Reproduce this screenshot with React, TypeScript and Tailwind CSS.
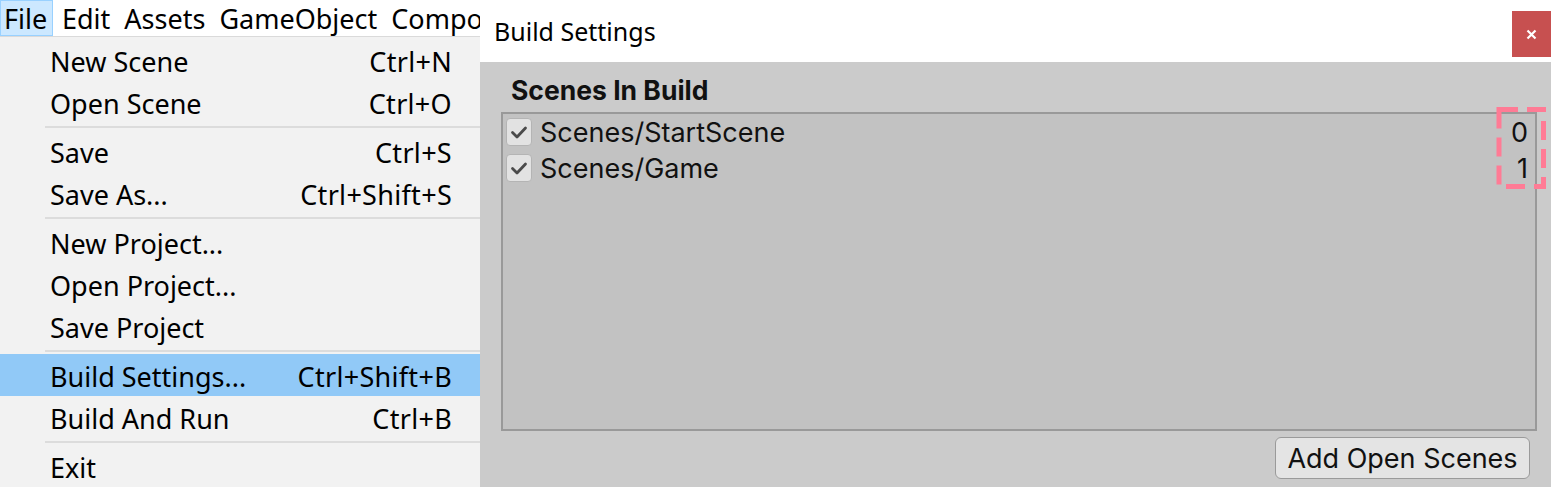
import React from "react";

const menuFont = { fontFamily: '"Noto Sans", "Open Sans", sans-serif' };

type Item = { label: string; shortcut?: string; active?: boolean } | "sep";

const items: Item[] = [
  { label: "New Scene", shortcut: "Ctrl+N" },
  { label: "Open Scene", shortcut: "Ctrl+O" },
  "sep",
  { label: "Save", shortcut: "Ctrl+S" },
  { label: "Save As...", shortcut: "Ctrl+Shift+S" },
  "sep",
  { label: "New Project..." },
  { label: "Open Project..." },
  { label: "Save Project" },
  "sep",
  { label: "Build Settings...", shortcut: "Ctrl+Shift+B", active: true },
  { label: "Build And Run", shortcut: "Ctrl+B" },
  "sep",
  { label: "Exit" },
];

function Check() {
  return (
    <div className="w-[26px] h-[28px] shrink-0 rounded-[4px] bg-[#e2e2e2] border border-[#b4b4b4] flex items-center justify-center">
      <svg width="20" height="20" viewBox="0 0 20 20">
        <polyline points="3.5,10.5 8,15 16.5,6" fill="none" stroke="#4a4a4a" strokeWidth="2.8" strokeLinecap="round" strokeLinejoin="round" />
      </svg>
    </div>
  );
}

export default function App() {
  return (
    <div className="relative w-[1551px] h-[487px] overflow-hidden flex bg-white">
      {/* Left: menu */}
      <div className="w-[480px] shrink-0 flex flex-col overflow-hidden bg-[#f2f2f2]" style={menuFont}>
        <div className="h-[37px] shrink-0 bg-white border-b border-[#dadada] flex items-stretch text-[27px] text-black whitespace-nowrap leading-none">
          <div className="w-[53px] shrink-0 bg-[#cce8ff] border border-[#99d1ff] flex items-center pl-[3px]">File</div>
          <div className="flex items-center pl-[9px] pr-[7px]">Edit</div>
          <div className="flex items-center px-[7px]">Assets</div>
          <div className="flex items-center px-[7px]">GameObject</div>
          <div className="flex items-center px-[7px]">Component</div>
        </div>
        <div className="flex flex-col pt-[2px] text-[27px] text-black leading-none">
          {items.map((it, i) =>
            it === "sep" ? (
              <div key={i} className="h-[7px] flex items-center pl-[45px]">
                <div className="h-[2px] w-full bg-[#dcdcdc]" />
              </div>
            ) : (
              <div
                key={i}
                className={`h-[42px] flex items-center justify-between pl-[50px] pr-[28px] pt-[3px] ${it.active ? "bg-[#91c9f7]" : ""}`}
              >
                <span>{it.label}</span>
                {it.shortcut && <span className="tracking-[0.3px]">{it.shortcut}</span>}
              </div>
            )
          )}
        </div>
      </div>

      {/* Right: dialog */}
      <div className="flex-1 flex flex-col">
        <div className="h-[62px] shrink-0 bg-white flex items-start justify-between">
          <div className="pl-[14px] pt-[19px] text-[25px] leading-none text-black" style={menuFont}>
            Build Settings
          </div>
          <div className="mt-[11px] w-[39px] h-[46px] bg-[#c75050] flex items-center justify-center">
            <svg width="11" height="11" viewBox="0 0 11 11">
              <path d="M1.5 1.5 L9.5 9.5 M9.5 1.5 L1.5 9.5" stroke="#ffffff" strokeWidth="2.2" />
            </svg>
          </div>
        </div>
        <div className="flex-1 bg-[#cbcbcb] flex flex-col pl-[21px] pr-[14px]" style={{ fontFamily: "Inter, sans-serif" }}>
          <div className="h-[50px] shrink-0 flex items-center pl-[10px] pt-[6px] text-[26.5px] font-bold text-[#111] leading-none">
            Scenes In Build
          </div>
          <div className="h-[319px] shrink-0 border-2 border-[#999999] bg-[#c2c2c2] flex flex-col pl-[3px] pr-[7px]">
            {[
              ["Scenes/StartScene", "0"],
              ["Scenes/Game", "1"],
            ].map(([name, idx]) => (
              <div key={name} className="h-[36px] flex items-center justify-between text-[27px] leading-none text-[#111]">
                <div className="flex items-center gap-[8px]">
                  <Check />
                  <span>{name}</span>
                </div>
                <span>{idx}</span>
              </div>
            ))}
          </div>
          <div className="flex justify-end pt-[6px] pr-[7px]">
            <div className="w-[255px] h-[42px] rounded-[6px] border border-[#9a9a9a] bg-[#e4e4e4] flex items-center justify-center text-[27px] leading-none text-[#111]">
              Add Open Scenes
            </div>
          </div>
        </div>
      </div>

      {/* Highlight dashed rectangle */}
      <svg className="absolute left-[1490px] top-[100px]" width="61" height="95" viewBox="0 0 61 95">
        <rect x="9" y="9.5" width="44.5" height="77" fill="none" stroke="#ff7b95" strokeWidth="5" strokeDasharray="19 9" />
      </svg>
    </div>
  );
}
